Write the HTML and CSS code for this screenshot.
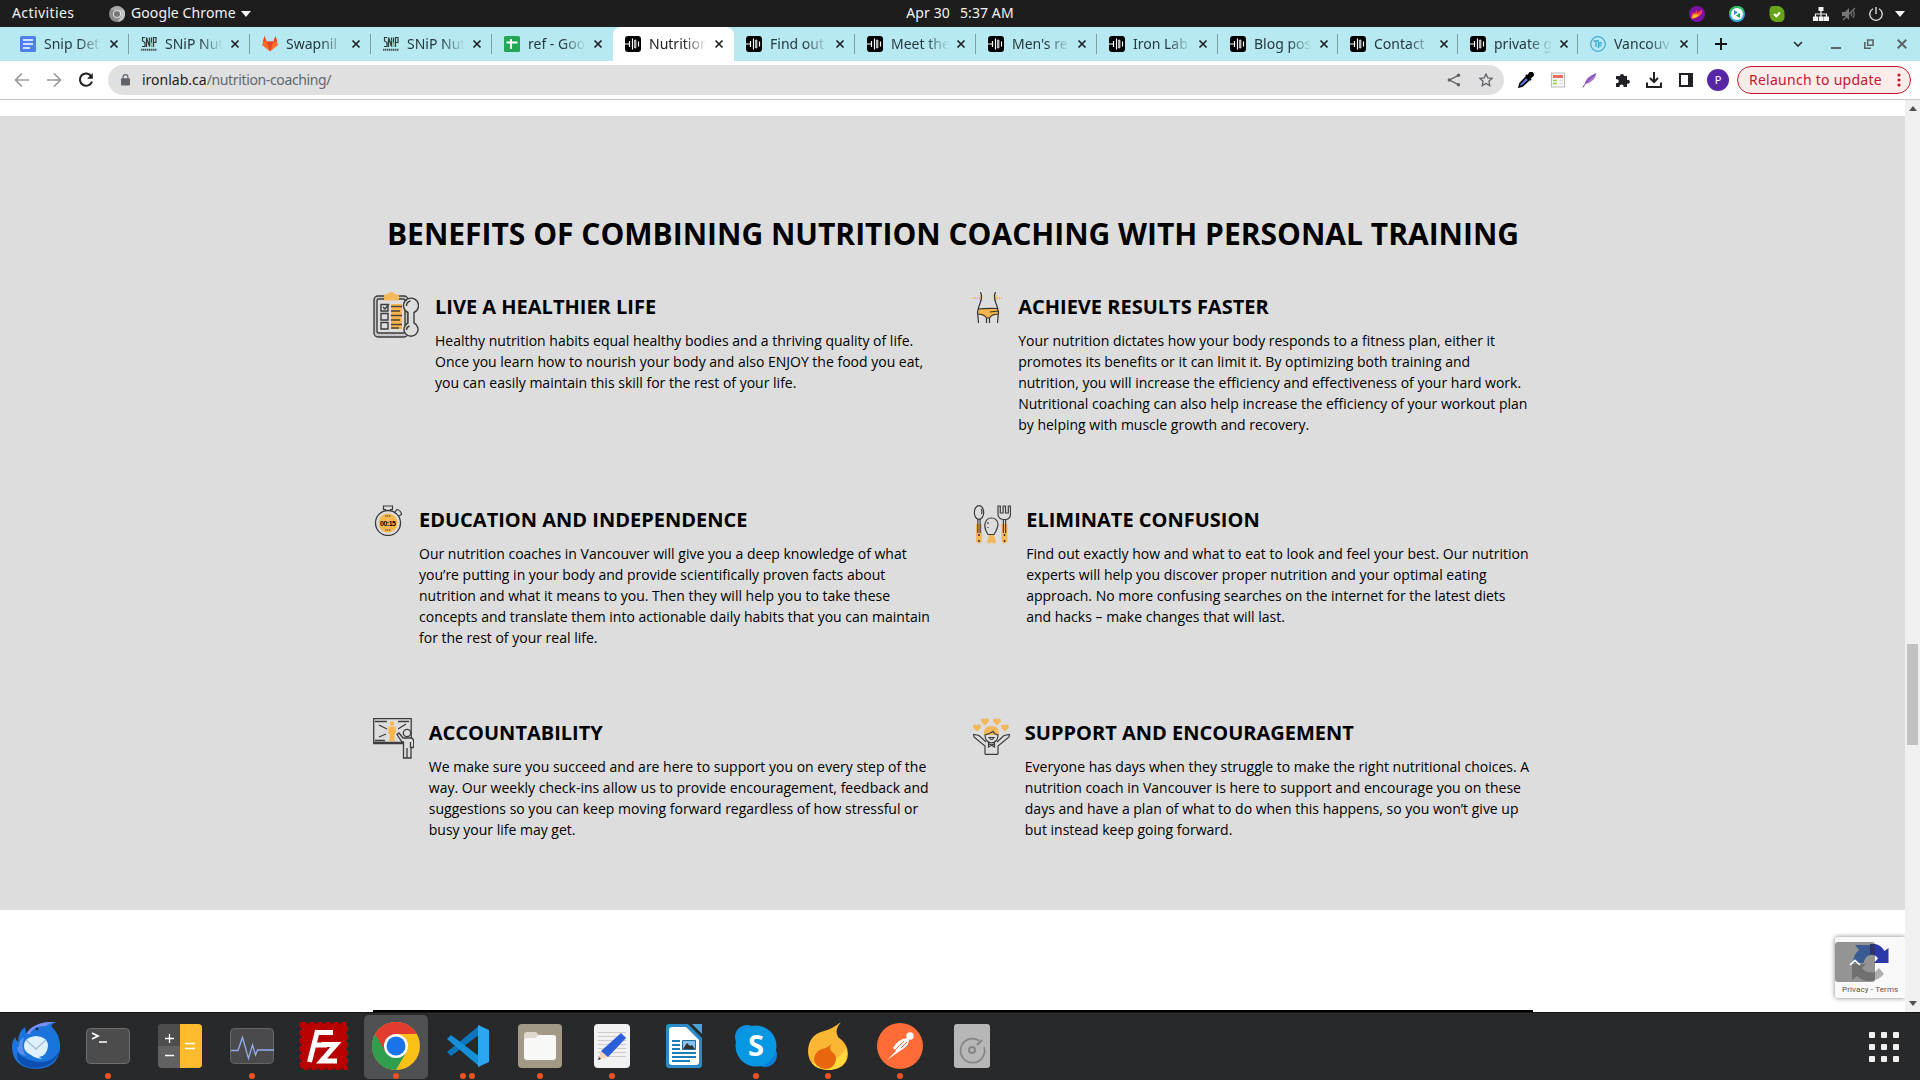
FILE: index.html
```html
<!DOCTYPE html>
<html lang="en">
<head>
<meta charset="utf-8">
<title>Nutrition Coaching</title>
<link rel="stylesheet" href="styles.css">
</head>
<body>
<svg class="defs" width="0" height="0" aria-hidden="true">
  <symbol id="x" viewBox="0 0 10 10"><path d="M1.500 1.500l7 7m0-7l-7 7" stroke="#202124" stroke-width="1.700"/></symbol>
  <symbol id="iron" viewBox="0 0 16 16"><rect width="16" height="16" rx="3" fill="#000"/><path d="M0 8h4M4.500 5v6M7.500 2.500v11M13.500 5.500v5" stroke="#fff" stroke-width="1.200" fill="none"/><path d="M9.500 4h1.500v8H9.500z" fill="#999" stroke="#fff" stroke-width=".6"/></symbol>
  <symbol id="snip" viewBox="0 0 16 16"><path d="M4 1.500H1.500V5L4 6.500v4H1M5.500 11V1.500L8.500 10.500V1.500M10.500 1.500v9.500M12.500 11V1.500h2.500v5h-2.500" fill="none" stroke="#30383a" stroke-width="1.200"/><path d="M9 4l2 7" stroke="#5cc9a5" stroke-width="1"/><path d="M10 11l1-5" stroke="#f0908c"/><path d="M0 13.700h16" stroke="#4c5658" stroke-width="2" stroke-dasharray="1.500 .5"/></symbol>
</svg>

<header class="sysbar">
  <div class="sys-left">
    <span class="activities">Activities</span>
    <svg width="16" height="16" viewBox="0 0 16 16"><circle cx="8" cy="8" r="8" fill="#8b8b8b"/><path d="M8 4h7a8 8 0 0 1-6 12l3-6z" fill="#c5c5c5"/><path d="M1.500 4A8 8 0 0 1 15 4H8z" fill="#a9a9a9"/><circle cx="8" cy="8" r="4" fill="#ddd"/><circle cx="8" cy="8" r="3" fill="#777"/></svg>
    <span class="appname">Google Chrome</span>
    <svg width="10" height="6" viewBox="0 0 10 6"><path d="M0 0h10L5 6z" fill="#f2f2f2"/></svg>
  </div>
  <div class="clock"><span class="day">Apr 30</span><span class="time">5:37 AM</span></div>
  <div class="sys-right">
    <svg width="16" height="16" viewBox="0 0 16 16"><circle cx="8" cy="8" r="8" fill="#7b12a5"/><path d="M2.500 13Q1.500 9 4.500 6l.5 2 3-4 .2 3L13 3.500q.8 4-2.500 6.500T2.500 13z" fill="#ff3b4e"/><path d="M3 12.500q0-3 2.500-5L6 9l2-1.500-.5 2 3-2q-1 4-7.500 5z" fill="#ffca16"/></svg>
    <svg width="16" height="16" viewBox="0 0 16 16"><circle cx="8" cy="8" r="8" fill="#36a9e8"/><path d="M0 8a8 8 0 0 1 15-4L12 13z" fill="#2ebb64"/><circle cx="8" cy="8" r="6" fill="#fff"/><path d="M5 4l4 2.500-4 2.500z" fill="#2b97d7"/><path d="M11 12l-4-2.500L11 7z" fill="#1f9e5d"/></svg>
    <svg width="16" height="16" viewBox="0 0 16 16"><path d="M4 0h5.500Q15 1.500 15.500 7v5q-1 4-5 4H7Q1 15 .5 9V4q.5-4 3.500-4z" fill="#68a516"/><path d="M5 8l2.300 2.300L11 6.500" fill="none" stroke="#fff" stroke-width="2"/></svg>
    <svg class="net" width="16" height="14" viewBox="0 0 16 14"><path d="M5.500 0h5v4h-5zM0 9.500h5V14H0zM5.700 9.500h5V14h-5zM11 9.500h5V14h-5z" fill="#f2f2f2"/><path d="M8 3v7M2.500 10V7h11v3" fill="none" stroke="#f2f2f2" stroke-width="1.200"/></svg>
    <svg width="16" height="14" viewBox="0 0 16 14"><path d="M1 5h3l4-4v12L4 9H1z" fill="#777"/><path d="M10 4.500q1.500 2.500 0 5M12 3q2.500 4 0 8M2 13L14 1" fill="none" stroke="#777" stroke-width="1.200"/></svg>
    <svg width="14" height="14" viewBox="0 0 14 14"><path d="M4 1.700a6.200 6.200 0 1 0 6 0M7 0v7" fill="none" stroke="#e8e8e8" stroke-width="1.300"/></svg>
    <svg width="10" height="6" viewBox="0 0 10 6"><path d="M0 0h10L5 6z" fill="#f2f2f2"/></svg>
  </div>
</header>

<nav class="tabstrip">
  <div class="tabs">
    <div class="tab"><svg viewBox="0 0 16 16"><rect width="16" height="16" rx="1.500" fill="#4f80ee"/><path d="M3 4h10M3 8h10M3 12h7" stroke="#fff" stroke-width="1.600"/></svg><span>Snip Det</span><svg class="close"><use href="#x"/></svg></div>
    <div class="tab"><svg><use href="#snip"/></svg><span>SNiP Nut</span><svg class="close"><use href="#x"/></svg></div>
    <div class="tab"><svg viewBox="0 0 16 16"><path d="M2.500 0l2 5.500h7l2-5.500L16 9l-8 6.500L0 9z" fill="#fc6d26"/><path d="M4.500 5.500h7L8 15.500z" fill="#e8432b"/><path d="M2.500 0l2 5.500H1zM13.500 0l-2 5.500H15z" fill="#e8432b"/></svg><span>Swapnil</span><svg class="close"><use href="#x"/></svg></div>
    <div class="tab"><svg><use href="#snip"/></svg><span>SNiP Nut</span><svg class="close"><use href="#x"/></svg></div>
    <div class="tab"><svg viewBox="0 0 16 16"><rect width="16" height="16" rx="1.500" fill="#23a757"/><path d="M2.500 6.500h11M7 3v10" stroke="#fff" stroke-width="1.900"/></svg><span>ref - Goo</span><svg class="close"><use href="#x"/></svg></div>
    <div class="tab active"><svg><use href="#iron"/></svg><span>Nutrition</span><svg class="close"><use href="#x"/></svg></div>
    <div class="tab"><svg><use href="#iron"/></svg><span>Find out</span><svg class="close"><use href="#x"/></svg></div>
    <div class="tab"><svg><use href="#iron"/></svg><span>Meet the</span><svg class="close"><use href="#x"/></svg></div>
    <div class="tab"><svg><use href="#iron"/></svg><span>Men's re</span><svg class="close"><use href="#x"/></svg></div>
    <div class="tab"><svg><use href="#iron"/></svg><span>Iron Lab</span><svg class="close"><use href="#x"/></svg></div>
    <div class="tab"><svg><use href="#iron"/></svg><span>Blog pos</span><svg class="close"><use href="#x"/></svg></div>
    <div class="tab"><svg><use href="#iron"/></svg><span>Contact</span><svg class="close"><use href="#x"/></svg></div>
    <div class="tab"><svg><use href="#iron"/></svg><span>private g</span><svg class="close"><use href="#x"/></svg></div>
    <div class="tab"><svg viewBox="0 0 16 16"><circle cx="8" cy="8" r="7.300" fill="none" stroke="#3fa9d6" stroke-width="1.200"/><path d="M3.500 5H9M6 5v6M8.500 12V7H12M8.500 9.500h3" fill="none" stroke="#3fa9d6" stroke-width="1.300"/></svg><span>Vancouv</span><svg class="close"><use href="#x"/></svg></div>
  </div>
  <svg class="newtab" width="12" height="12" viewBox="0 0 12 12"><path d="M6 0v12M0 6h12" stroke="#111" stroke-width="1.900"/></svg>
  <div class="winctl">
    <svg width="10" height="7" viewBox="0 0 10 7"><path d="M1 1l4 4 4-4" fill="none" stroke="#333" stroke-width="1.700"/></svg>
    <svg width="10" height="10" viewBox="0 0 10 10"><path d="M0 9h10" stroke="#5b6467" stroke-width="2"/></svg>
    <svg width="10" height="10" viewBox="0 0 10 10"><path d="M3.700 1h5.300v5.300H3.700zM.8 3v6.200H7" fill="none" stroke="#5b6467" stroke-width="1.600"/></svg>
    <svg width="10" height="10" viewBox="0 0 10 10"><path d="M.7.700l8.600 8.600m0-8.600L.7 9.300" stroke="#5b6467" stroke-width="2"/></svg>
  </div>
</nav>

<div class="toolbar">
  <div class="navbtns">
    <svg viewBox="0 0 16 16"><path d="M15 8H2M8 1.500L1.500 8 8 14.500" fill="none" stroke="#9a9a9a" stroke-width="1.700"/></svg>
    <svg viewBox="0 0 16 16"><path d="M1 8h13M8 1.500L14.500 8 8 14.500" fill="none" stroke="#9a9a9a" stroke-width="1.700"/></svg>
    <svg viewBox="0 0 16 16"><path d="M13.300 4.200A6.200 6.200 0 1 0 14 9.500" fill="none" stroke="#202124" stroke-width="2"/><path d="M14.800 1v5.800H9z" fill="#202124"/></svg>
  </div>
  <div class="omnibox">
    <svg class="lock" width="9" height="12" viewBox="0 0 10 13"><rect y="4.500" width="10" height="8" rx="1" fill="#5f6368"/><path d="M2.300 5V3.200a2.700 2.700 0 0 1 5.400 0V5" fill="none" stroke="#5f6368" stroke-width="1.300"/></svg>
    <span class="host">ironlab.ca</span><span class="path">/nutrition-coaching/</span>
    <svg class="share" width="14" height="14" viewBox="0 0 14 14"><path d="M11.500 2.300L2.500 7l9 4.700" fill="none" stroke="#5f6368" stroke-width="1.300"/><circle cx="11.500" cy="2.200" r="1.700" fill="#5f6368"/><circle cx="2.300" cy="7" r="1.700" fill="#5f6368"/><circle cx="11.500" cy="11.800" r="1.700" fill="#5f6368"/></svg>
    <svg class="star" width="14" height="14" viewBox="0 0 14 14"><path d="M7 1l1.800 4 4.300.4-3.200 2.900.9 4.300L7 10.400l-3.800 2.200.9-4.300L.9 5.400 5.200 5z" fill="none" stroke="#5f6368" stroke-width="1.300"/></svg>
  </div>
  <div class="exts">
    <svg viewBox="0 0 16 16"><path d="M1 15l1-3.500 6-6.500 3 3-6.500 6z" fill="#5a6fd8" stroke="#000" stroke-width="1.500"/><path d="M8 3l5 5M9 5l3-4q3-1 3 2l-4 4z" fill="#000" stroke="#000" stroke-width="2"/></svg>
    <svg viewBox="0 0 16 16"><rect x="1.500" y="1" width="13" height="14" fill="#f6f6f6" stroke="#bbb"/><path d="M3 4.500h10" stroke="#f26a5c" stroke-width="3"/><path d="M3 8.500h4M3 11.500h4" stroke="#8bd44c" stroke-width="1.400"/><path d="M9 8.500h4M9 11.500h4" stroke="#ddd"/></svg>
    <svg viewBox="0 0 16 16"><path d="M3 12Q3 5 14.500 1 13 10 3 12z" fill="#a672cf"/><path d="M1 15.500Q4 9 13.500 2" stroke="#6e3a9e" fill="none"/></svg>
    <svg viewBox="0 0 16 16"><path d="M2 4h4a2 2 0 1 1 4 0h3v4a2 2 0 1 1 0 3.600V15H9.500a2 2 0 1 0-3.800 0H2v-4a2 2 0 1 0 0-3.700z" fill="#202124"/></svg>
    <svg viewBox="0 0 16 16"><path d="M8 0v9M4 6l4 4 4-4M1 10.500V15h14v-4.500" fill="none" stroke="#202124" stroke-width="2"/></svg>
    <svg viewBox="0 0 16 16"><path d="M2 2h12v12H2z" fill="none" stroke="#202124" stroke-width="2"/><path d="M10 2h4v12h-4z" fill="#202124"/></svg>
  </div>
  <span class="avatar">P</span>
  <div class="relaunch"><span>Relaunch to update</span><svg width="4" height="14" viewBox="0 0 4 14"><circle cx="2" cy="2" r="1.600"/><circle cx="2" cy="7" r="1.600"/><circle cx="2" cy="12" r="1.600"/></svg></div>
</div>

<div class="viewport">
  <main class="page">
    <section class="benefits">
      <h2>BENEFITS OF COMBINING NUTRITION COACHING WITH PERSONAL TRAINING</h2>
      <div class="grid">
        <article class="live">
          <svg width="46" height="46" viewBox="0 0 46 46"><g fill="none" stroke="#3c3c3c" stroke-width="1.400"><rect x="1" y="4" width="34" height="41" rx="4" fill="#c6c6c6"/><rect x="4" y="7" width="28" height="34" rx="2" fill="#ddd"/><path d="M8 12.500h7v6.500H8zM8 21.500h7V28H8zM8 30.500h7V37H8zM10 15l2 2 4-5"/><path d="M35 20.500a7.500 7.500 0 1 1 6 0q0 5 0 5v5.500a7 7 0 1 1-6 0v-5.500z" fill="#ddd"/><path d="M33.500 14q0-4 4-5M33.500 38q0-3 3-4"/></g><path d="M18 12h11v25H18z" fill="#f3b64d"/><path d="M18 14.500h11M18 19h9M18 23.500h11M18 28h9M18 32.500h11M18 36h8" stroke="#4c4332" stroke-width="1.600"/><path d="M11 2.500h3.500Q15.500 0 18.500 0T22 2.500h4v6H11z" fill="#f3b85a"/></svg>
          <div><h3>LIVE A HEALTHIER LIFE</h3>
          <p>Healthy nutrition habits equal healthy bodies and a thriving quality of life.<br>Once you learn how to nourish your body and also ENJOY the food you eat,<br>you can easily maintain this skill for the rest of your life.</p></div>
        </article>
        <article class="achieve">
          <svg width="30" height="31" viewBox="0 0 30 31"><path d="M5 17q9-1 20-.5l.5 6.500q-6 0-8.500 3h-4Q10 23 4.500 22z" fill="#f3b64d"/><path d="M0 6h8M22 6h8" stroke="#f3b64d" stroke-width="2" stroke-dasharray="1 1"/><path d="M7 3v6M23 3v6" stroke="#f3b64d"/><path d="M7.500 0q2 5 0 10T4.500 20L5.500 31M22.500 0q-2 5 0 10t3 10L24.500 31M5 17q9-1 20-.5M4.500 22q7 0 9 4h3q2-4 9-4M13.500 26v5M16.500 26v5M17 20l8-1" fill="none" stroke="#333" stroke-width="1.200"/></svg>
          <div><h3>ACHIEVE RESULTS FASTER</h3>
          <p>Your nutrition dictates how your body responds to a fitness plan, either it<br>promotes its benefits or it can limit it. By optimizing both training and<br>nutrition, you will increase the efficiency and effectiveness of your hard work.<br>Nutritional coaching can also help increase the efficiency of your workout plan<br>by helping with muscle growth and recovery.</p></div>
        </article>
        <article class="edu">
          <svg width="30" height="31" viewBox="0 0 30 31"><circle cx="15" cy="18" r="12.500" fill="#ddd" stroke="#3a3a3a" stroke-width="1.300"/><circle cx="15" cy="18" r="9.500" fill="#f8b84e"/><path d="M12.500 6V4.500h-2V1h9v3.500h-2V6M22 7l2-2.500q4 1 4.500 5L26 11" fill="none" stroke="#3a3a3a" stroke-width="1.200"/><path d="M12 11h6M12 25h6" stroke="#8b6a31" stroke-width="1.700" stroke-dasharray="1.500 .5"/><text x="15" y="20.700" font-family="Liberation Sans" font-weight="700" font-size="7" text-anchor="middle" textLength="16">00:15</text></svg>
          <div><h3>EDUCATION AND INDEPENDENCE</h3>
          <p>Our nutrition coaches in Vancouver will give you a deep knowledge of what<br>you’re putting in your body and provide scientifically proven facts about<br>nutrition and what it means to you. Then they will help you to take these<br>concepts and translate them into actionable daily habits that you can maintain<br>for the rest of your real life.</p></div>
        </article>
        <article class="elim">
          <svg width="38" height="39" viewBox="0 0 38 39"><path d="M3 19h6v17q-3 5-6 0zM28.500 19h6v17q-3 5-6 0zM16 30h5l2 7q-2 3-4.500 0-2.500 3-4.500 0z" fill="#f3b85a"/><g fill="none" stroke="#3c3c3c" stroke-width="1.200"><ellipse cx="6" cy="7.500" rx="4.700" ry="6.800" fill="#ddd"/><path d="M8 4q1.500 2 .5 5M4.900 14v14M7.100 14v14M30.400 14v14M32.600 14v14M25 1v8q0 5 5.400 5.500h2.200Q37.500 14 37.500 9V1h-2.200v7h-2.800V1h-2.400v7h-2.800V1zM15 29.500q-4-6-3-10.500 1-6 6.500-6t6.500 6q0 4-4 10.500zM15 17v2M15 22v1"/></g><path d="M6 29v2M6 35v2M31.500 29v2M31.500 35v2" stroke="#333" stroke-width="1.500"/></svg>
          <div><h3>ELIMINATE CONFUSION</h3>
          <p>Find out exactly how and what to eat to look and feel your best. Our nutrition<br>experts will help you discover proper nutrition and your optimal eating<br>approach. No more confusing searches on the internet for the latest diets<br>and hacks – make changes that will last.</p></div>
        </article>
        <article class="acc">
          <svg width="41" height="41" viewBox="0 0 41 41"><g fill="none" stroke="#3c3c3c" stroke-width="1.300"><path d="M.7.700h37.500v25H.7z"/><path d="M.7 24.500h29M2 3.500h12M25 3.500h11M2 22.500h10M6 7l8 4M6 19l7-3M33 6l-8 5"/><path d="M30 20l-4-5-2 1.500 5 7.500h1.500V40h7.500V29.500h2.700V24q0-4-3-4z" fill="#ddd"/><path d="M34 30v10M37.500 24v6"/><circle cx="34" cy="15" r="3.700" fill="#ddd"/></g><circle cx="19" cy="5.500" r="2.200" fill="#f8b84e"/><path d="M15.500 8.500h7l.5 7h-1.500V23h-5v-7.500H15z" fill="#f8b84e"/></svg>
          <div><h3>ACCOUNTABILITY</h3>
          <p>We make sure you succeed and are here to support you on every step of the<br>way. Our weekly check-ins allow us to provide encouragement, feedback and<br>suggestions so you can keep moving forward regardless of how stressful or<br>busy your life may get.</p></div>
        </article>
        <article class="sup">
          <svg width="37" height="37" viewBox="0 0 37 37"><defs><path id="heart" d="M4 7.500L.4 4Q-.6 1.500 1.500.5 3.300 0 4 1.500 4.700 0 6.500.5 8.600 1.500 7.600 4z" fill="#f3b85a"/></defs><use href="#heart" x="8"/><use href="#heart" x="20"/><use href="#heart" y="6"/><use href="#heart" x="28" y="6"/><path d="M11 17q-1-9 7.500-9t7.500 9z" fill="#f3b85a"/><g fill="none" stroke="#3c3c3c" stroke-width="1.200"><path d="M12 17q0 7 6.500 8 6.500-1 6.500-8-4-1-5-3.500-4 2.500-8 3.500zM16 19.500h5q-2.500 4-5 0zM15.500 25.500l6 3.500v-3.500l-6 3.500zM12 36.300V28L1 19l-.5-2.500L6 17.500l7 6.500M25 36.300V28l11-9 .5-2.500L31 17.500 24 24M12 36.300h13"/></g></svg>
          <div><h3>SUPPORT AND ENCOURAGEMENT</h3>
          <p>Everyone has days when they struggle to make the right nutritional choices. A<br>nutrition coach in Vancouver is here to support and encourage you on these<br>days and have a plan of what to do when this happens, so you won’t give up<br>but instead keep going forward.</p></div>
        </article>
      </div>
    </section>
    <div class="next"></div>
    <aside class="captcha">
      <svg width="40" height="40" viewBox="0 0 40 40"><path d="M19 1h5q6 1 9.500 7l4-3v15H23l4-4.500Q24 11 19 12z" fill="#2c39a8"/><path d="M4 2h15v10q-5 1-6.500 8H2q0-8 6-13z" fill="#4285f4"/><path d="M1 21h14l-4 4q5 6 13 4l4-4 5 6q-6 7-14 7-8 0-13-5l-5 4z" fill="#b0b0b0"/></svg>
      <span>Privacy - Terms</span>
      <div class="totop"><svg width="12" height="7" viewBox="0 0 12 7"><path d="M1 6l5-4.700L11 6" fill="none" stroke="#fff" stroke-width="1.700"/></svg></div>
    </aside>
  </main>
  <div class="scrollbar">
    <svg width="8" height="5" viewBox="0 0 8 5"><path d="M0 5h8L4 0z" fill="#505050"/></svg>
    <div class="thumb"></div>
    <svg class="down" width="8" height="5" viewBox="0 0 8 5"><path d="M0 0h8L4 5z" fill="#505050"/></svg>
  </div>
</div>

<footer class="dock">
  <div class="app"><svg viewBox="0 0 48 48"><path d="M14 12Q22-1 45 0q-7 2-5 5 9 9 8 22-2 19-24 20Q1 46 0 26q0-7 3-11 1 4 3 5 0-10 7-15 1 4 1 7z" fill="#1a74dc"/><path d="M14 12Q22-1 45 0q-6 0-11 4Q22 3 18 12z" fill="#7f8df5"/><path d="M5 30q-1 15 19 16 20-2 24-18-8 14-22 12T5 30z" fill="#0d4fb0"/><path d="M12 15Q8 26 14 34q-8-1-9-9 2 1 2-1 0-6 5-9z" fill="#5c8ef2"/><path d="M12 24q0-9 12-10 12 1 12 10-1 10-9 11 2 2 5 2-8 0-13-4-7-3-7-9z" fill="#dff0fd"/><path d="M14 18l10 9 10-9" fill="none" stroke="#a9bfd2" stroke-width="1.500"/><circle cx="25" cy="7" r="1.300" fill="#123"/></svg></div>
  <div class="app d1"><svg viewBox="0 0 48 48"><rect x="2.500" y="6.500" width="43" height="35" rx="4" fill="#4c4c4c" stroke="#707070"/><path d="M8 11l6 3-6 3M15 20h8" fill="none" stroke="#fff" stroke-width="1.700"/></svg></div>
  <div class="app"><svg viewBox="0 0 48 48"><rect x="2" y="2" width="44" height="44" rx="4" fill="#616161"/><path d="M24 2H6Q2 2 2 6v18h22z" fill="#4d4d4d"/><path d="M24 2h18q4 0 4 4v36q0 4-4 4H24z" fill="#fdbb2d"/><path d="M9 16.500h9M13.500 12v9M9 33.500h9M29 21.500h10M29 26.500h10" stroke="#fff" stroke-width="1.300"/></svg></div>
  <div class="app d1"><svg viewBox="0 0 48 48"><rect x="2.500" y="6.500" width="43" height="35" rx="4" fill="#4a4a4c" stroke="#666"/><path d="M3 28.500h7l4.500-13 6 21L24.500 23l3 10 2-5H46" fill="none" stroke="#92aef0" stroke-width="1.300"/></svg></div>
  <div class="app"><svg viewBox="0 0 48 48"><rect x="1.500" y="1.500" width="45" height="45" fill="#b80000" stroke="#b80000" stroke-width="3" stroke-dasharray="5 3"/><path d="M33 10.500H17L9.500 40M13 23h14M21.500 22.500H36L21.500 39H37" fill="none" stroke="#fff" stroke-width="5"/></svg></div>
  <div class="app focus d1"><svg viewBox="0 0 48 48"><circle cx="24" cy="24" r="24" fill="#fbc116"/><path d="M24 24L34.400 30 24 48A24 24 0 0 1 3.200 12z" fill="#2f9e4f"/><path d="M3.200 12a24 24 0 0 1 41.600 0H24L13.600 30z" fill="#e33b2e"/><circle cx="24" cy="24" r="12" fill="#fff"/><circle cx="24" cy="24" r="9.500" fill="#1a73e8"/></svg></div>
  <div class="app d2"><svg viewBox="0 0 48 48"><path d="M3 30l4 4L36 12V3z" fill="#0b75bd"/><path d="M3 17l4-4 29 22v10z" fill="#1590d8"/><path d="M34 3l11 5v32l-11 5z" fill="#2ba7f2"/></svg></div>
  <div class="app d1"><svg viewBox="0 0 48 48"><rect x="2" y="2" width="44" height="44" rx="4" fill="#a29a86"/><path d="M8 35V13q0-3 3-3h9l3 3h14q3 0 3 3z" fill="#ddd9cf"/><path d="M11 16h8l4-3h14q3 0 3 3v19q0 3-3 3H11q-3 0-3-3V19q0-3 3-3z" fill="#f8f8f7"/></svg></div>
  <div class="app d1"><svg viewBox="0 0 48 48"><rect x="6" y="2" width="36" height="44" rx="4" fill="#f2f2f2"/><path d="M10 10.500h28M10 14.500h28M10 18.500h28M10 22.500h28M10 26.500h28M10 30.500h28M10 34.500h28" stroke="#ccc"/><path d="M10 38l3-9 7 6z" fill="#f5d3b8"/><path d="M10 38l1-3 2 2z" fill="#333"/><path d="M13 29L33 11l5 5-18 19z" fill="#2b5fd9"/></svg></div>
  <div class="app"><svg viewBox="0 0 48 48"><path d="M9 2h19l14 14v27q0 3-3 3H9q-3 0-3-3V5q0-3 3-3z" fill="#2c8ac6"/><path d="M32 2h10v10z" fill="#4fa2d6"/><path d="M12 5h14l13 13v22q0 3-3 3H12q-3 0-3-3V8q0-3 3-3z" fill="#fff"/><path d="M12 19h8M12 23h8M12 27h8M12 31h24M12 35h24M12 39h18" stroke="#1b7cb9" stroke-width="2"/><path d="M22.500 18.500h13v9h-13z" fill="#83c5f0" stroke="#1b6ea6"/><path d="M23 27l4-6 3 3 2-1 3 4z" fill="#333"/></svg></div>
  <div class="app d1"><svg viewBox="0 0 48 48"><circle cx="15" cy="15" r="12" fill="#0e8fe0"/><circle cx="33" cy="33" r="12" fill="#0b7fdc"/><circle cx="24" cy="24" r="20.500" fill="#0797e3"/><text x="24" y="34" text-anchor="middle" font-family="Open Sans" font-weight="700" font-size="29" fill="#fff">S</text></svg></div>
  <div class="app d1"><svg viewBox="0 0 48 48"><path d="M37 0q-7 8-3 15 10 7 10 17-1 15-19 16Q5 47 4 30 4 13 20 9 28 7 37 0z" fill="#fbb634"/><path d="M42 26q4 19-16 22-14 0-18-7 24 3 34-15z" fill="#ffdc3c"/><path d="M28 21q-4 5 0 9 4 2 4 8-2 9-11 9-9-1-11-9 0-8 8-11 6-1 10-6z" fill="#e8660e"/></svg></div>
  <div class="app d1"><svg viewBox="0 0 48 48"><circle cx="24" cy="24" r="23" fill="#ff6c37"/><circle cx="34" cy="14" r="3.700" fill="#fff"/><path d="M31 16q-9 1-14 10l3 3-9 9 13-9q9-5 9-11z" fill="#fff"/><path d="M19 28l9-9M25 26l6-6" stroke="#ff6c37"/></svg></div>
  <div class="app"><svg viewBox="0 0 48 48"><rect x="6" y="2" width="36" height="44" rx="3" fill="#b7b7b7"/><path d="M31 18.500A12 12 0 1 0 36 25" fill="none" stroke="#858585" stroke-width="1.700"/><path d="M29 23l5-5" stroke="#858585" stroke-width="2"/><circle cx="24" cy="28" r="3" fill="none" stroke="#858585" stroke-width="2"/></svg></div>
  <div class="apps"><i></i><i></i><i></i><i></i><i></i><i></i><i></i><i></i><i></i></div>
</footer>
</body>
</html>
```

FILE: styles.css
```css
* { box-sizing: border-box; }
html, body { margin: 0; height: 100%; overflow: hidden; }
body { display: flex; flex-direction: column; width: 1920px; height: 1080px; background: #fff; font-family: "Noto Sans", "Open Sans", sans-serif; }
svg { display: block; flex: none; }
.defs { position: absolute; }

.sysbar { flex: none; height: 27px; background: #1d1d1d; color: #f2f2f2; display: grid; grid-template-columns: 1fr auto 1fr; align-items: center; font-size: 14px; line-height: 24px; }
.sysbar span { padding-bottom: 2px; }
.sys-left { display: flex; align-items: center; padding-left: 12px; }
.activities { width: 97px; letter-spacing: .4px; }
.appname { width: 104px; margin: 0 6px; white-space: nowrap; letter-spacing: .1px; }
.clock { display: flex; gap: 10px; }
.clock span { white-space: nowrap; letter-spacing: .1px; }
.sys-right { display: flex; align-items: center; justify-content: flex-end; gap: 24px; padding-right: 15px; }
.net { margin-left: 4px; }
.net + svg { margin-left: -12px; }
.net + svg + svg { margin-left: -12px; }
.net + svg + svg + svg { margin-left: -12px; }

.tabstrip { flex: none; height: 34px; background: #b6e9f1; display: flex; align-items: center; padding-left: 8px; }
.tabs { display: flex; width: 1691px; height: 34px; }
.tab { flex: none; width: 121px; display: flex; align-items: center; padding-left: 12px; position: relative; color: #26393d; }
.tab:nth-child(n+11) { width: 120px; }
.tab > svg:first-child { width: 16px; height: 16px; }
.tab span { width: 58px; margin-left: 8px; overflow: hidden; white-space: nowrap; font-size: 14px; line-height: 24px; -webkit-mask-image: linear-gradient(90deg, #000 60%, transparent); mask-image: linear-gradient(90deg, #000 60%, transparent); }
.tab .close { width: 10px; height: 10px; margin-left: 7px; }
.tab::after { content: ""; position: absolute; right: 0; top: 7px; width: 1px; height: 20px; background: #7f9da2; }
.tab.active { background: #fff; border-radius: 8px 8px 0 0; color: #222; }
.tab.active::after, .tab:nth-child(5)::after { background: none; }
.newtab { margin-left: 16px; }
.winctl { margin-left: auto; padding-right: 13px; display: flex; align-items: center; gap: 23px; }
.winctl svg:first-child { margin-right: 5px; }

.toolbar { flex: none; height: 39px; border-bottom: 1px solid #c9c9c9; display: flex; align-items: center; }
.navbtns { display: flex; gap: 16px; padding-left: 14px; width: 108px; }
.navbtns svg { width: 16px; height: 16px; }
.omnibox { width: 1396px; height: 30px; border-radius: 15px; background: #e0e0e0; display: flex; align-items: center; padding: 0 11px 0 13px; font-size: 14px; }
.omnibox span { padding-bottom: 2px; }
.host { margin-left: 12px; color: #1e1e1e; }
.path { color: #63676b; letter-spacing: -.36px; }
.share { margin-left: auto; margin-right: 18px; }
.exts { display: flex; gap: 16px; margin-left: 14px; }
.exts svg { width: 16px; height: 16px; }
.avatar { width: 22px; height: 22px; margin-left: 13px; border-radius: 50%; background: #5726a5; color: #fff; font-size: 11px; line-height: 22px; text-align: center; }
.relaunch { margin-left: 8px; width: 174px; height: 28px; border: 1px solid #c5162e; border-radius: 14px; background: #f9eceb; color: #c5162e; fill: #c5162e; display: flex; align-items: center; padding-left: 11px; font-size: 14px; }
.relaunch span { width: 133px; white-space: nowrap; letter-spacing: .26px; padding-bottom: 1px; }
.relaunch svg { margin-left: 15px; }

.viewport { flex: none; height: 912px; display: flex; }
.page { flex: 1; min-width: 0; position: relative; padding-top: 16px; font-family: "Open Sans", sans-serif; color: #000; }
.benefits { height: 794px; background: #ddd; padding: 94px 372px 0 373px; }
h2 { margin: 0; height: 82px; font-size: 30px; line-height: 48px; font-weight: 700; text-align: center; white-space: nowrap; }
.grid { display: grid; grid-template-columns: 600px 560px; grid-auto-rows: 213px; }
article { display: flex; gap: 16px; align-items: flex-start; }
.achieve, .elim { gap: 15.200px; }
.acc { gap: 14.800px; }
.sup { gap: 14.800px; }
h3 { margin: 3px 0 0; font-size: 20px; line-height: 24px; font-weight: 700; white-space: nowrap; }
p { margin: 11px 0 0; font-size: 14px; line-height: 21px; white-space: nowrap; }
.next { height: 102px; margin: 0 372px 0 373px; border-bottom: 2px solid #000; }
.captcha { position: absolute; right: 0; bottom: 14px; width: 70px; height: 61px; background: #f9f9f9; border-radius: 3px 0 0 3px; box-shadow: 0 0 5px #808080; clip-path: inset(-8px 0 -8px -8px); }
.captcha > svg { margin: 6px 0 0 16px; }
.captcha > span { display: block; margin: 1px 0 0 7px; font: 8px/12px Roboto, sans-serif; letter-spacing: .13px; color: #555; white-space: nowrap; }
.totop { position: absolute; left: 0; top: 5px; width: 40px; height: 40px; border-radius: 3px; background: rgba(47, 47, 47, .5); }
.totop svg { margin: 17px auto 0 14px; }
.scrollbar { flex: none; width: 15px; background: #f0f0f0; display: flex; flex-direction: column; align-items: center; padding: 6px 0; }
.thumb { width: 11px; height: 101px; margin-top: 533px; background: #c1c1c1; }
.down { margin-top: auto; }

.dock { flex: none; height: 68px; background: #28292b; border-top: 1px solid #171717; display: flex; align-items: center; }
.app { width: 64px; height: 64px; margin: 0 4px; padding: 7px 8px 0; border-radius: 5px; position: relative; }
.app svg { width: 48px; height: 48px; }
.focus { background: #505153; }
.d1::after, .d2::after { content: ""; position: absolute; left: 29px; bottom: 0; width: 6px; height: 6px; border-radius: 50%; background: #e95420; }
.d2::after { left: 24px; box-shadow: 9px 0 #e95420; }
.apps { margin-left: auto; margin-right: 21px; display: grid; grid-template-columns: repeat(3, 6px); gap: 6px; }
.apps i { width: 6px; height: 6px; border-radius: 1px; background: #f1f0ee; }
```
